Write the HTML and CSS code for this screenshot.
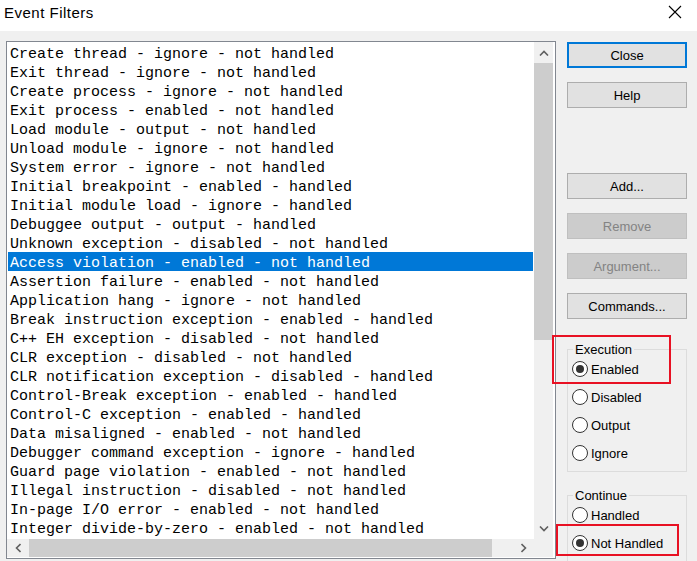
FILE: index.html
```html
<!DOCTYPE html>
<html>
<head>
<meta charset="utf-8">
<title>Event Filters</title>
<link rel="stylesheet" href="styles.css">
</head>
<body>
<div class="titlebar">
  <span class="title">Event Filters</span>
  <svg class="close-x" width="14" height="14" viewBox="0 0 14 14"><path d="M1 1 L13 13 M13 1 L1 13" stroke="#000" stroke-width="1.1" fill="none"/></svg>
</div>
<div class="main">
  <div class="listbox">
    <div class="items">
      <div class="row">Create thread - ignore - not handled</div>
      <div class="row">Exit thread - ignore - not handled</div>
      <div class="row">Create process - ignore - not handled</div>
      <div class="row">Exit process - enabled - not handled</div>
      <div class="row">Load module - output - not handled</div>
      <div class="row">Unload module - ignore - not handled</div>
      <div class="row">System error - ignore - not handled</div>
      <div class="row">Initial breakpoint - enabled - handled</div>
      <div class="row">Initial module load - ignore - handled</div>
      <div class="row">Debuggee output - output - handled</div>
      <div class="row">Unknown exception - disabled - not handled</div>
      <div class="row selected">Access violation - enabled - not handled</div>
      <div class="row">Assertion failure - enabled - not handled</div>
      <div class="row">Application hang - ignore - not handled</div>
      <div class="row">Break instruction exception - enabled - handled</div>
      <div class="row">C++ EH exception - disabled - not handled</div>
      <div class="row">CLR exception - disabled - not handled</div>
      <div class="row">CLR notification exception - disabled - handled</div>
      <div class="row">Control-Break exception - enabled - handled</div>
      <div class="row">Control-C exception - enabled - handled</div>
      <div class="row">Data misaligned - enabled - not handled</div>
      <div class="row">Debugger command exception - ignore - handled</div>
      <div class="row">Guard page violation - enabled - not handled</div>
      <div class="row">Illegal instruction - disabled - not handled</div>
      <div class="row">In-page I/O error - enabled - not handled</div>
      <div class="row">Integer divide-by-zero - enabled - not handled</div>
    </div>
    <div class="vscroll">
      <div class="arrow-v"><svg width="10" height="6" viewBox="0 0 10 6"><polyline points="1,5.5 5,1.5 9,5.5" fill="none" stroke="#606060" stroke-width="1.6"/></svg></div>
      <div class="vtrack"><div class="vthumb"></div></div>
      <div class="arrow-v"><svg width="10" height="6" viewBox="0 0 10 6"><polyline points="1,0.5 5,4.5 9,0.5" fill="none" stroke="#606060" stroke-width="1.6"/></svg></div>
    </div>
    <div class="hscroll">
      <div class="arrow-h"><svg width="6" height="10" viewBox="0 0 6 10"><polyline points="5.5,1 1.5,5 5.5,9" fill="none" stroke="#606060" stroke-width="1.6"/></svg></div>
      <div class="htrack"><div class="hthumb"></div></div>
      <div class="arrow-h"><svg width="6" height="10" viewBox="0 0 6 10"><polyline points="0.5,1 4.5,5 0.5,9" fill="none" stroke="#606060" stroke-width="1.6"/></svg></div>
    </div>
    <div class="corner"></div>
  </div>
  <div class="side">
    <button class="btn default">Close</button>
    <button class="btn gap-s">Help</button>
    <button class="btn gap-l">Add...</button>
    <button class="btn gap-s disabled">Remove</button>
    <button class="btn gap-s disabled">Argument...</button>
    <button class="btn gap-s">Commands...</button>
    <fieldset class="group exec">
      <legend>Execution</legend>
      <div class="radio"><span class="dot checked"></span><span>Enabled</span></div>
      <div class="radio"><span class="dot"></span><span>Disabled</span></div>
      <div class="radio"><span class="dot"></span><span>Output</span></div>
      <div class="radio"><span class="dot"></span><span>Ignore</span></div>
    </fieldset>
    <fieldset class="group cont">
      <legend>Continue</legend>
      <div class="radio"><span class="dot"></span><span>Handled</span></div>
      <div class="radio"><span class="dot checked"></span><span>Not Handled</span></div>
    </fieldset>
  </div>
</div>
<div class="mark mark-exec"></div>
<div class="mark mark-cont"></div>
</body>
</html>
```

FILE: styles.css
```css
html, body {
  margin: 0;
  padding: 0;
}
body {
  width: 697px;
  height: 561px;
  overflow: hidden;
  background: #f0f0f0;
  font-family: "Liberation Sans", Arial, sans-serif;
  font-size: 13px;
  color: #000;
  position: relative;
}
.titlebar {
  height: 31px;
  box-sizing: border-box;
  background: #fff;
  display: flex;
  align-items: center;
  justify-content: space-between;
  padding: 0 15px 7px 4px;
}
.title {
  font-size: 15px;
  letter-spacing: 0.5px;
}
.close-x {
  display: block;
}
.main {
  display: flex;
  align-items: flex-start;
  padding: 10px 0 0 6px;
}
.listbox {
  width: 550px;
  box-sizing: border-box;
  border: 1px solid #828790;
  background: #fff;
  padding-right: 2px;
  display: grid;
  grid-template-columns: 527px 19px;
  grid-template-rows: 497px 18px;
  padding-bottom: 1px;
}
.items {
  padding: 1px 1px 0 1px;
  overflow: hidden;
  font-family: "Liberation Mono", "DejaVu Sans Mono", monospace;
  font-size: 15px;
}
.row {
  height: 19px;
  line-height: 23px;
  padding-left: 2px;
  white-space: pre;
}
.row.selected {
  background: #0078d7;
  color: #fff;
}
.vscroll {
  background: #f0f0f0;
  display: flex;
  flex-direction: column;
}
.arrow-v {
  height: 21px;
  display: flex;
  align-items: center;
  justify-content: center;
  flex: none;
}
.vtrack {
  flex: 1;
}
.vthumb {
  height: 277px;
  background: #cdcdcd;
}
.hscroll {
  background: #f0f0f0;
  display: flex;
}
.arrow-h {
  width: 21px;
  display: flex;
  align-items: center;
  justify-content: center;
  flex: none;
}
.htrack {
  flex: 1;
  padding-left: 1px;
  display: flex;
}
.hthumb {
  width: 463px;
  background: #cdcdcd;
}
.corner {
  background: #f0f0f0;
}
.side {
  margin-left: 11px;
  width: 120px;
  display: flex;
  flex-direction: column;
  padding-top: 1px;
}
.btn {
  height: 26px;
  box-sizing: border-box;
  background: #e1e1e1;
  border: 1px solid #adadad;
  font-family: "Liberation Sans", Arial, sans-serif;
  font-size: 13px;
  color: #000;
  padding: 0;
  margin: 0;
}
.btn.default {
  border: 2px solid #0078d7;
}
.btn.gap-s {
  margin-top: 14px;
}
.btn.gap-l {
  margin-top: 65px;
}
.btn.disabled {
  background: #cccccc;
  border-color: #bfbfbf;
  color: #838383;
}
.group {
  margin: 0;
  padding: 0 0 4px 4px;
  border: 1px solid #dcdcdc;
  min-width: 0;
}
.group legend {
  padding: 0 2px;
  margin-left: 1px;
  line-height: 11px;
  font-size: 13px;
}
.group.exec {
  margin-top: 25px;
}
.group.cont {
  margin-top: 18px;
  padding-bottom: 10px;
}
.radio {
  height: 28px;
  display: flex;
  align-items: center;
  gap: 3px;
}
.dot {
  width: 16px;
  height: 16px;
  box-sizing: border-box;
  border: 1px solid #333;
  border-radius: 50%;
  background: #fff;
  display: flex;
  align-items: center;
  justify-content: center;
  flex: none;
}
.dot.checked::after {
  content: "";
  width: 8px;
  height: 8px;
  border-radius: 50%;
  background: #333;
}
.mark {
  position: absolute;
  border: 2px solid #e81123;
  box-sizing: border-box;
}
.mark-exec {
  left: 552px;
  top: 335px;
  width: 119px;
  height: 49px;
}
.mark-cont {
  left: 556px;
  top: 524px;
  width: 123px;
  height: 32px;
}
```
